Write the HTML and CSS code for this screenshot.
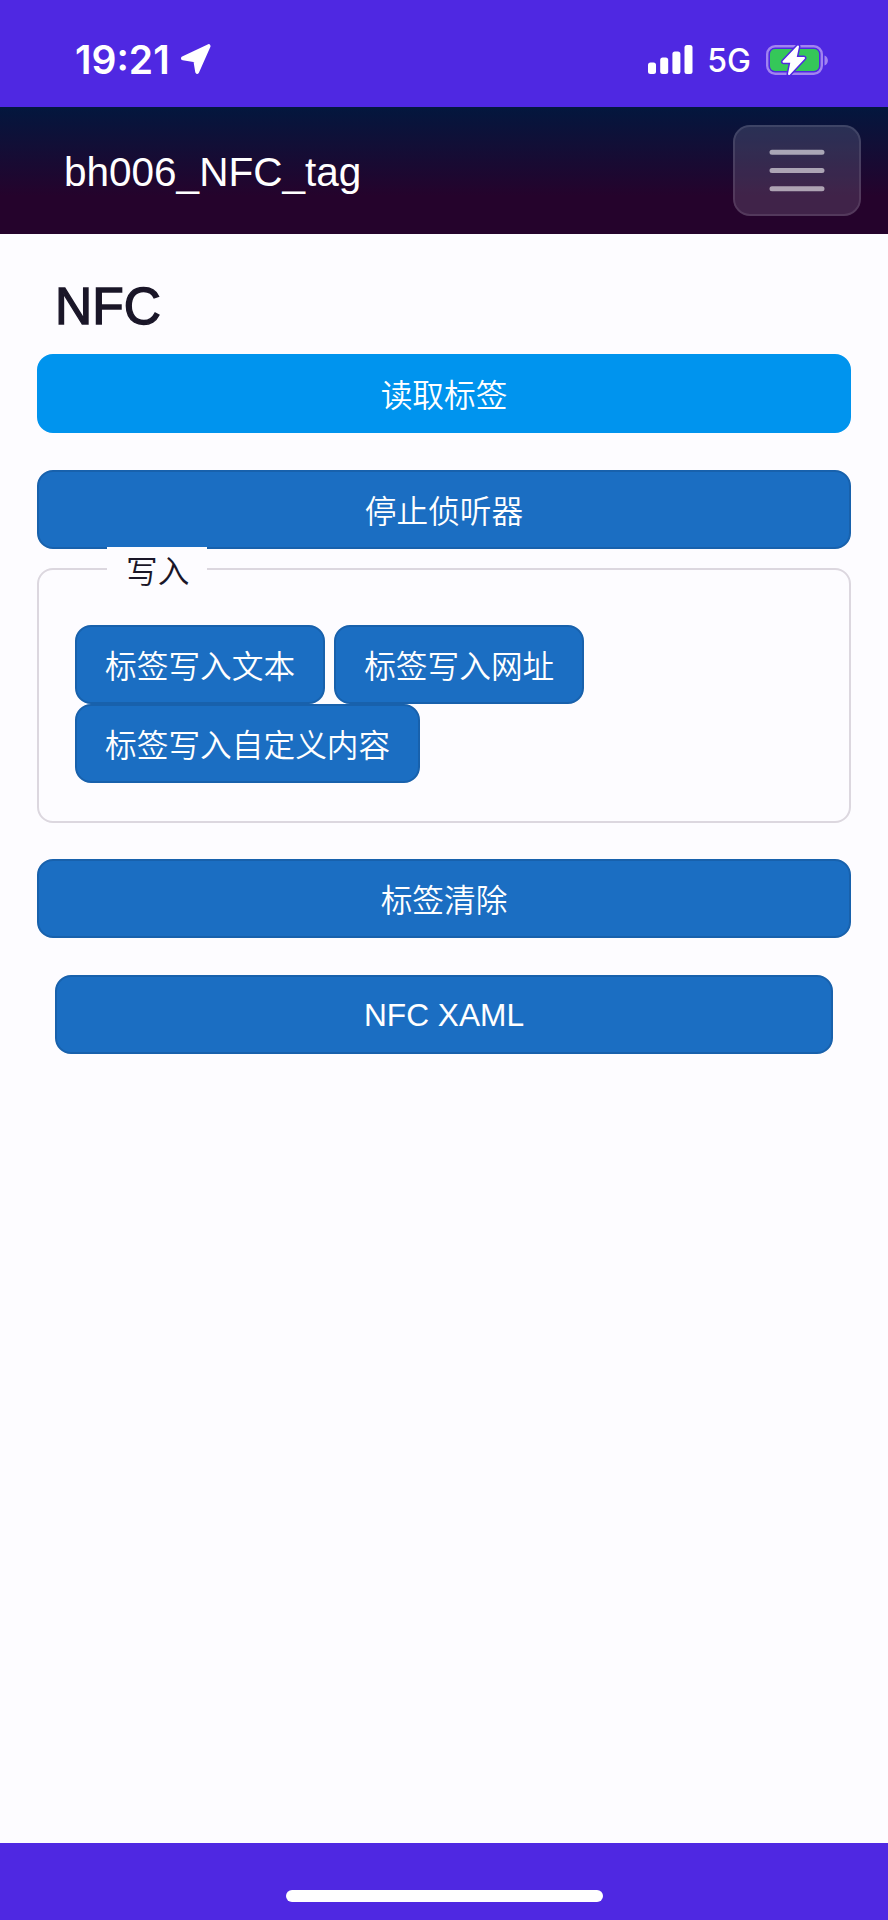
FILE: index.html
```html
<!DOCTYPE html>
<html lang="zh-CN">
<head>
    <meta charset="UTF-8">
    <meta name="viewport" content="width=device-width, initial-scale=1.0">
    <title>bh006_NFC_tag</title>
    <link rel="stylesheet" href="styles.css">
</head>
<body>
    <div class="status-bar">
        <div class="status-left">
            <span class="time">19:21</span>
            <svg class="location" width="31" height="31" viewBox="0 0 31 31">
                <path d="M28.5 2.2 L17.2 27.8 L15.3 16.2 L3 14.2 Z" fill="#fff" stroke="#fff" stroke-width="4" stroke-linejoin="round"/>
            </svg>
        </div>
        <div class="status-right">
            <svg class="signal" width="45" height="29" viewBox="0 0 45 29" fill="#fff">
                <rect x="0" y="17.5" width="8" height="11.5" rx="2.5"/>
                <rect x="12.2" y="12.5" width="8" height="16.5" rx="2.5"/>
                <rect x="24.4" y="6.5" width="8" height="22.5" rx="2.5"/>
                <rect x="36.5" y="0" width="8" height="29" rx="2.5"/>
            </svg>
            <span class="network">5G</span>
            <svg class="battery" width="63" height="32" viewBox="0 0 63 32">
                <rect x="1.2" y="2.2" width="54.6" height="27.6" rx="8" fill="none" stroke="#a183f0" stroke-width="2.4"/>
                <rect x="4" y="5" width="49" height="22" rx="5" fill="#35c759"/>
                <path d="M58.5 11.5 C63 13 63 20 58.5 21.5 Z" fill="#a183f0"/>
                <path d="M32 2.5 L17.5 17.8 H25.5 L23 30 L38 14 H29.5 Z" fill="#fff" stroke="#4f28e2" stroke-width="5" stroke-linejoin="round"/>
                <path d="M32 2.5 L17.5 17.8 H25.5 L23 30 L38 14 H29.5 Z" fill="#fff" stroke="#fff" stroke-width="2" stroke-linejoin="round"/>
            </svg>
        </div>
    </div>

    <nav class="navbar">
        <span class="brand">bh006_NFC_tag</span>
        <button class="toggler">
            <svg width="56" height="43" viewBox="0 0 56 43" stroke="currentColor" stroke-width="5" stroke-linecap="round">
                <path d="M3 3.2 H53 M3 21.5 H53 M3 39.8 H53"/>
            </svg>
        </button>
    </nav>

    <main>
        <h3>NFC</h3>
        <button class="btn active">读取标签</button>
        <button class="btn">停止侦听器</button>
        <fieldset>
            <legend>写入</legend>
            <div class="write-buttons">
                <button class="btn">标签写入文本</button>
                <button class="btn">标签写入网址</button>
                <button class="btn">标签写入自定义内容</button>
            </div>
        </fieldset>
        <button class="btn">标签清除</button>
        <button class="btn narrow">NFC XAML</button>
    </main>

    <footer>
        <div class="home-indicator"></div>
    </footer>
</body>
</html>
```
FILE: styles.css
```css
* {
    box-sizing: border-box;
}
body {
    margin: 0;
    height: 1920px;
    display: flex;
    flex-direction: column;
    font-family: "Liberation Sans", "Noto Sans CJK SC", sans-serif;
    background: #fdfcff;
    color: #1a1628;
}
.status-bar {
    height: 107px;
    padding: 12px 59px 0 75px;
    display: flex;
    justify-content: space-between;
    align-items: center;
    background: #4f28e2;
    color: #fff;
    font-family: Inter, sans-serif;
}
.status-left,
.status-right {
    display: flex;
    align-items: center;
}
.time {
    font-size: 39px;
    font-weight: 600;
    line-height: 40px;
}
.location {
    margin-left: 10px;
}
.network {
    margin: 3px 15px 0 14px;
    font-size: 32px;
    font-weight: 450;
    line-height: 36px;
}
.navbar {
    height: 127px;
    padding: 0 27px 0 64px;
    display: flex;
    justify-content: space-between;
    align-items: center;
    background: linear-gradient(180deg, #03173e 0%, #25032c 70%);
    color: #fff;
}
.brand {
    font-size: 40.5px;
    padding-top: 3px;
}
.toggler {
    width: 128px;
    height: 91px;
    padding: 0;
    display: flex;
    justify-content: center;
    align-items: center;
    border: 2px solid rgba(255, 255, 255, 0.1);
    border-radius: 17px;
    background: rgba(235, 235, 255, 0.14);
    color: rgba(255, 255, 255, 0.58);
}
main {
    flex: 1;
    padding: 41px 37px 0;
    display: flex;
    flex-direction: column;
}
h3 {
    margin: 0 0 17px 18px;
    font-size: 51.5px;
    font-weight: 400;
    line-height: 62px;
    -webkit-text-stroke: 1.4px #1a1628;
}
.btn {
    height: 79px;
    margin-bottom: 37px;
    padding: 0 28px 1px;
    border: 2px solid #1861ac;
    border-radius: 16px;
    background: #1b6ec2;
    color: #fff;
    font-family: inherit;
    font-size: 31.7px;
    font-weight: 350;
}
.btn.active {
    background: #0094ee;
    border-color: #0094ee;
}
.btn.narrow {
    margin: 0 18px;
    padding: 2px 28px 0;
}
fieldset {
    min-width: 0;
    height: 276px;
    margin: -39px 0 36px;
    padding: 0 36px;
    border: 2px solid #dcd7df;
    border-radius: 16px;
}
legend {
    height: 44px;
    margin-left: 32px;
    padding: 4px 18px 0 19px;
    background: #fdfcff;
    font-size: 31.7px;
    font-weight: 350;
    line-height: 42px;
}
.write-buttons {
    padding-top: 34px;
    display: flex;
    flex-wrap: wrap;
    column-gap: 9px;
}
.write-buttons .btn {
    margin-bottom: 0;
}
footer {
    height: 77px;
    padding-top: 47px;
    background: #4f28e2;
}
.home-indicator {
    width: 317px;
    height: 12px;
    margin: 0 auto;
    border-radius: 6px;
    background: #fff;
}
```
